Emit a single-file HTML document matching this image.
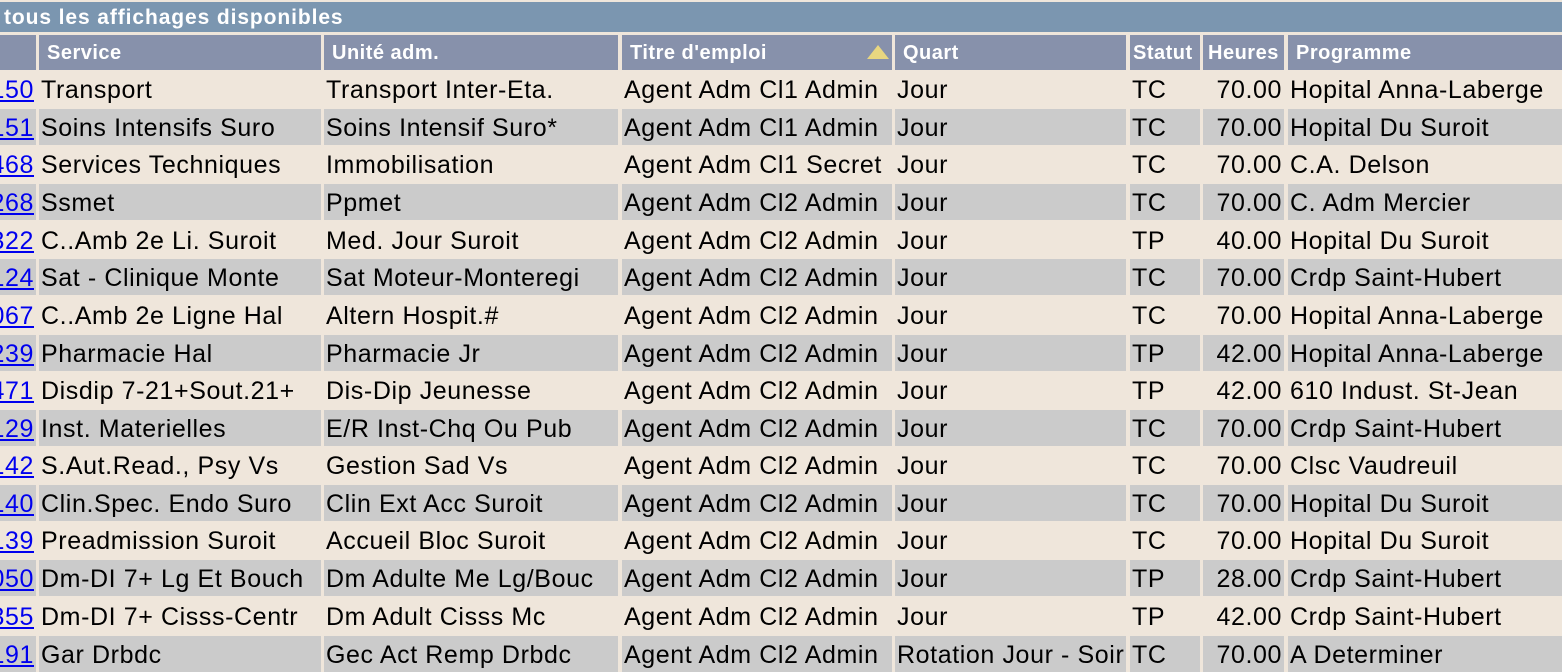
<!DOCTYPE html>
<html><head><meta charset="utf-8">
<style>
*{margin:0;padding:0;box-sizing:border-box}
body{width:1562px;height:649px;overflow:hidden;background:#efe6db;font-family:"Liberation Sans",Arial,sans-serif;position:relative}
.title{position:absolute;left:0;top:2px;width:1562px;height:30px;background:#7b96b0;color:#fff;font-weight:bold;font-size:21px;letter-spacing:0.9px;line-height:31px;padding-left:4px}
.r{position:absolute;left:0;width:1562px;height:36px}
.r div{position:absolute;top:0;height:36px;line-height:38px;font-size:25px;letter-spacing:0.6px;color:#000;white-space:nowrap;overflow:hidden;padding-left:2px}
.g div{background:#cbcbcb}
.h div{background:#8791ab;color:#fff;font-weight:bold;font-size:20px;letter-spacing:0.5px;padding-left:8px;height:35px;line-height:36px}
.r .c0{left:0;width:36px;display:flex;justify-content:flex-end;padding:0 2px 0 0}
.c1{left:39px;width:282px}
.c2{left:324px;width:294px}
.c3{left:622px;width:270px}
.c4{left:895px;width:231px}
.c5{left:1130px;width:70px}
.r .c6{left:1203px;width:81px;text-align:right;padding:0 2px 0 0}
.c7{left:1288px;width:280px}
.h .c5{padding-left:3px}
.h .c6{text-align:left!important;padding-left:5px!important}
a{color:#0000ee;text-decoration:underline}
.tri{position:absolute;left:867px;top:45px;width:0;height:0;border-left:11px solid transparent;border-right:11px solid transparent;border-bottom:14px solid #e8d680}
</style></head><body>
<div class="title">tous les affichages disponibles</div>
<div class="r h" style="top:35px"><div class="c0"></div><div class="c1">Service</div><div class="c2">Unité adm.</div><div class="c3">Titre d'emploi</div><div class="c4">Quart</div><div class="c5">Statut</div><div class="c6">Heures</div><div class="c7">Programme</div></div>
<div class="tri"></div>
<div class="r" style="top:71px"><div class="c0"><a>1150</a></div><div class="c1">Transport</div><div class="c2">Transport Inter-Eta.</div><div class="c3">Agent Adm Cl1 Admin</div><div class="c4">Jour</div><div class="c5">TC</div><div class="c6">70.00</div><div class="c7">Hopital Anna-Laberge</div></div>
<div class="r g" style="top:109px"><div class="c0"><a>1151</a></div><div class="c1">Soins Intensifs Suro</div><div class="c2">Soins Intensif Suro*</div><div class="c3">Agent Adm Cl1 Admin</div><div class="c4">Jour</div><div class="c5">TC</div><div class="c6">70.00</div><div class="c7">Hopital Du Suroit</div></div>
<div class="r" style="top:146px"><div class="c0"><a>1468</a></div><div class="c1">Services Techniques</div><div class="c2">Immobilisation</div><div class="c3">Agent Adm Cl1 Secret</div><div class="c4">Jour</div><div class="c5">TC</div><div class="c6">70.00</div><div class="c7">C.A. Delson</div></div>
<div class="r g" style="top:184px"><div class="c0"><a>1268</a></div><div class="c1">Ssmet</div><div class="c2">Ppmet</div><div class="c3">Agent Adm Cl2 Admin</div><div class="c4">Jour</div><div class="c5">TC</div><div class="c6">70.00</div><div class="c7">C. Adm Mercier</div></div>
<div class="r" style="top:222px"><div class="c0"><a>1322</a></div><div class="c1">C..Amb 2e Li. Suroit</div><div class="c2">Med. Jour Suroit</div><div class="c3">Agent Adm Cl2 Admin</div><div class="c4">Jour</div><div class="c5">TP</div><div class="c6">40.00</div><div class="c7">Hopital Du Suroit</div></div>
<div class="r g" style="top:259px"><div class="c0"><a>1124</a></div><div class="c1">Sat - Clinique Monte</div><div class="c2">Sat Moteur-Monteregi</div><div class="c3">Agent Adm Cl2 Admin</div><div class="c4">Jour</div><div class="c5">TC</div><div class="c6">70.00</div><div class="c7">Crdp Saint-Hubert</div></div>
<div class="r" style="top:297px"><div class="c0"><a>1067</a></div><div class="c1">C..Amb 2e Ligne Hal</div><div class="c2">Altern Hospit.#</div><div class="c3">Agent Adm Cl2 Admin</div><div class="c4">Jour</div><div class="c5">TC</div><div class="c6">70.00</div><div class="c7">Hopital Anna-Laberge</div></div>
<div class="r g" style="top:335px"><div class="c0"><a>1239</a></div><div class="c1">Pharmacie Hal</div><div class="c2">Pharmacie Jr</div><div class="c3">Agent Adm Cl2 Admin</div><div class="c4">Jour</div><div class="c5">TP</div><div class="c6">42.00</div><div class="c7">Hopital Anna-Laberge</div></div>
<div class="r" style="top:372px"><div class="c0"><a>1471</a></div><div class="c1">Disdip 7-21+Sout.21+</div><div class="c2">Dis-Dip Jeunesse</div><div class="c3">Agent Adm Cl2 Admin</div><div class="c4">Jour</div><div class="c5">TP</div><div class="c6">42.00</div><div class="c7">610 Indust. St-Jean</div></div>
<div class="r g" style="top:410px"><div class="c0"><a>1129</a></div><div class="c1">Inst. Materielles</div><div class="c2">E/R Inst-Chq Ou Pub</div><div class="c3">Agent Adm Cl2 Admin</div><div class="c4">Jour</div><div class="c5">TC</div><div class="c6">70.00</div><div class="c7">Crdp Saint-Hubert</div></div>
<div class="r" style="top:447px"><div class="c0"><a>1142</a></div><div class="c1">S.Aut.Read., Psy Vs</div><div class="c2">Gestion Sad Vs</div><div class="c3">Agent Adm Cl2 Admin</div><div class="c4">Jour</div><div class="c5">TC</div><div class="c6">70.00</div><div class="c7">Clsc Vaudreuil</div></div>
<div class="r g" style="top:485px"><div class="c0"><a>1140</a></div><div class="c1">Clin.Spec. Endo Suro</div><div class="c2">Clin Ext Acc Suroit</div><div class="c3">Agent Adm Cl2 Admin</div><div class="c4">Jour</div><div class="c5">TC</div><div class="c6">70.00</div><div class="c7">Hopital Du Suroit</div></div>
<div class="r" style="top:522px"><div class="c0"><a>1139</a></div><div class="c1">Preadmission Suroit</div><div class="c2">Accueil Bloc Suroit</div><div class="c3">Agent Adm Cl2 Admin</div><div class="c4">Jour</div><div class="c5">TC</div><div class="c6">70.00</div><div class="c7">Hopital Du Suroit</div></div>
<div class="r g" style="top:560px"><div class="c0"><a>1050</a></div><div class="c1">Dm-DI 7+ Lg Et Bouch</div><div class="c2">Dm Adulte Me Lg/Bouc</div><div class="c3">Agent Adm Cl2 Admin</div><div class="c4">Jour</div><div class="c5">TP</div><div class="c6">28.00</div><div class="c7">Crdp Saint-Hubert</div></div>
<div class="r" style="top:598px"><div class="c0"><a>1355</a></div><div class="c1">Dm-DI 7+ Cisss-Centr</div><div class="c2">Dm Adult Cisss Mc</div><div class="c3">Agent Adm Cl2 Admin</div><div class="c4">Jour</div><div class="c5">TP</div><div class="c6">42.00</div><div class="c7">Crdp Saint-Hubert</div></div>
<div class="r g" style="top:636px"><div class="c0"><a>1191</a></div><div class="c1">Gar Drbdc</div><div class="c2">Gec Act Remp Drbdc</div><div class="c3">Agent Adm Cl2 Admin</div><div class="c4">Rotation Jour - Soir</div><div class="c5">TC</div><div class="c6">70.00</div><div class="c7">A Determiner</div></div>
</body></html>
